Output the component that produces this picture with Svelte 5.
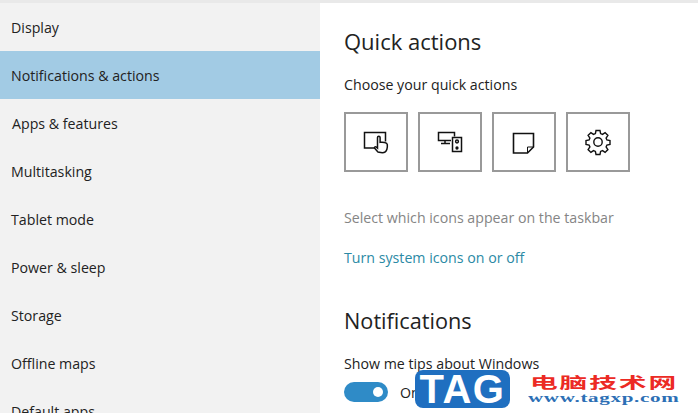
<script>
  const navItems = [
    'Display',
    'Notifications & actions',
    'Apps & features',
    'Multitasking',
    'Tablet mode',
    'Power & sleep',
    'Storage',
    'Offline maps',
    'Default apps'
  ];
</script>

<div class="window">
  <nav class="sidebar">
    {#each navItems as item}
      <div class="nav-item" class:active={item === 'Notifications & actions'} class:nudge={item === 'Apps & features'}>{item}</div>
    {/each}
  </nav>

  <main class="content">
    <h2 class="first">Quick actions</h2>
    <p class="choose">Choose your quick actions</p>

    <div class="tiles">
      <div class="tile">
        <svg width="28" height="28" viewBox="0 0 28 28" fill="none" stroke="#111" stroke-width="1.500">
          <path d="M13 20H2.500V4.500h21v9" />
          <path d="M15.500 23.500l-2.800-3.200c-.8-1 .5-2.100 1.500-1.300l1.300 1.100V9.500c0-1.600 2.600-1.600 2.600 0v4.800c2.500-.4 7 0 7.200 2.200.2 2 .1 3.300-.4 4.800-.7 2.400-2.500 3.400-4.600 3.400s-3.300-.6-4.300-.7z" fill="#fff" />
        </svg>
      </div>
      <div class="tile">
        <svg width="28" height="28" viewBox="0 0 28 28" fill="none" stroke="#111" stroke-width="1.500">
          <path d="M15 12.500H2.500V4.500h16v4" />
          <path d="M9 12.500v3M5 15.500h9" />
          <rect x="16.500" y="9.500" width="9" height="14" />
          <circle cx="21" cy="13.500" r="1.400" />
          <circle cx="21" cy="20" r=".9" fill="#111" />
        </svg>
      </div>
      <div class="tile">
        <svg width="28" height="28" viewBox="0 0 28 28" fill="none" stroke="#111" stroke-width="1.600">
          <path d="M3.500 5.500h20V19l-6 6H3.500z" />
          <path d="M23.500 19h-6v6" stroke-width="1" />
        </svg>
      </div>
      <div class="tile">
        <svg width="28" height="28" viewBox="0 0 28 28" fill="none" stroke="#111" stroke-width="1.400">
          <circle cx="14" cy="14" r="4.200" />
          <path d="M12 2.500h4l.6 3.100 1.900.8 2.600-1.800 2.800 2.800-1.800 2.600.8 1.900 3.100.6v4l-3.100.6-.8 1.900 1.800 2.600-2.800 2.800-2.600-1.800-1.900.8-.6 3.100h-4l-.6-3.100-1.900-.8-2.600 1.800-2.800-2.800 1.800-2.600-.8-1.900-3.100-.6v-4l3.100-.6.8-1.900-1.800-2.600 2.800-2.800 2.600 1.800 1.900-.8z" />
        </svg>
      </div>
    </div>

    <p class="muted">Select which icons appear on the taskbar</p>
    <p class="link">Turn system icons on or off</p>

    <h2 class="second">Notifications</h2>
    <p class="tips">Show me tips about Windows</p>
    <div class="toggle-row">
      <span class="toggle"><span class="knob"></span></span>
      <span class="on">On</span>
    </div>
  </main>

  <div class="watermark">
    <div class="tag">TAG</div>
    <div class="brand">
      <span class="cn">电脑技术网</span>
      <span class="url">www.tagxp.com</span>
    </div>
  </div>
</div>

<style>
  :global(body) {
    margin: 0;
    background: #fff;
  }

  .window {
    position: relative;
    width: 698px;
    height: 413px;
    overflow: hidden;
    display: flex;
    background: #fff;
    border-top: 3px solid #e9e9e9;
    box-sizing: border-box;
    font-family: "Open Sans", "Noto Sans", sans-serif;
    color: #1a1a1a;
  }

  .sidebar {
    width: 320px;
    flex-shrink: 0;
    background: #f2f2f2;
  }

  .nav-item {
    height: 48px;
    padding-left: 11px;
    display: flex;
    align-items: center;
    font-size: 14.2px;
    color: #222;
  }

  .nav-item.active {
    background: #a2cbe4;
  }

  .nav-item.nudge {
    padding-left: 12px;
  }

  .content {
    padding-left: 24px;
    flex: 1;
  }

  h2 {
    margin: 0;
    font-size: 22px;
    font-weight: 400;
    line-height: 30px;
    color: #222;
  }

  h2.first {
    margin-top: 23px;
  }

  h2.second {
    margin-top: 38px;
    font-size: 21.7px;
  }

  p {
    margin: 0;
    font-size: 14.2px;
    line-height: 20px;
    color: #222;
  }

  .choose {
    margin-top: 19px;
  }

  .tiles {
    display: flex;
    gap: 10px;
    margin-top: 17px;
  }

  .tile {
    width: 64px;
    height: 60px;
    box-sizing: border-box;
    border: 2px solid #999;
    display: flex;
    align-items: center;
    justify-content: center;
  }

  p.muted {
    margin-top: 36px;
    color: #858585;
  }

  p.link {
    margin-top: 20px;
    color: #2b8aa5;
  }

  .tips {
    margin-top: 18px;
  }

  .toggle-row {
    display: flex;
    align-items: center;
    gap: 12px;
    margin-top: 8px;
  }

  .toggle {
    width: 44px;
    height: 20px;
    border-radius: 10px;
    background: #2f8bc7;
    position: relative;
  }

  .knob {
    position: absolute;
    right: 5px;
    top: 5px;
    width: 10px;
    height: 10px;
    border-radius: 50%;
    background: #fff;
  }

  .on {
    font-size: 14.2px;
    color: #222;
  }

  .watermark {
    position: absolute;
    left: 415px;
    top: 367px;
    display: flex;
    gap: 18px;
    align-items: center;
  }

  .tag {
    width: 95px;
    height: 38px;
    border-radius: 8px;
    background: #1f6fc0;
    color: #fff;
    font-family: "Liberation Sans", sans-serif;
    font-weight: 700;
    font-size: 40px;
    line-height: 38px;
    text-align: center;
    letter-spacing: 1.5px;
  }

  .brand {
    width: 146px;
    display: flex;
    flex-direction: column;
    gap: 2px;
  }

  .cn {
    display: block;
    font-family: "Noto Sans CJK SC", sans-serif;
    font-weight: 700;
    font-size: 15px;
    line-height: 16px;
    letter-spacing: 1px;
    white-space: nowrap;
    color: #ec2a24;
    transform: scaleX(1.85);
    transform-origin: left center;
    margin-left: 2px;
  }

  .url {
    display: block;
    font-family: "Liberation Serif", serif;
    font-weight: 700;
    font-size: 12px;
    line-height: 13px;
    letter-spacing: 0.4px;
    white-space: nowrap;
    color: #2c6fb5;
    transform: scaleX(1.75);
    transform-origin: left center;
  }
</style>
